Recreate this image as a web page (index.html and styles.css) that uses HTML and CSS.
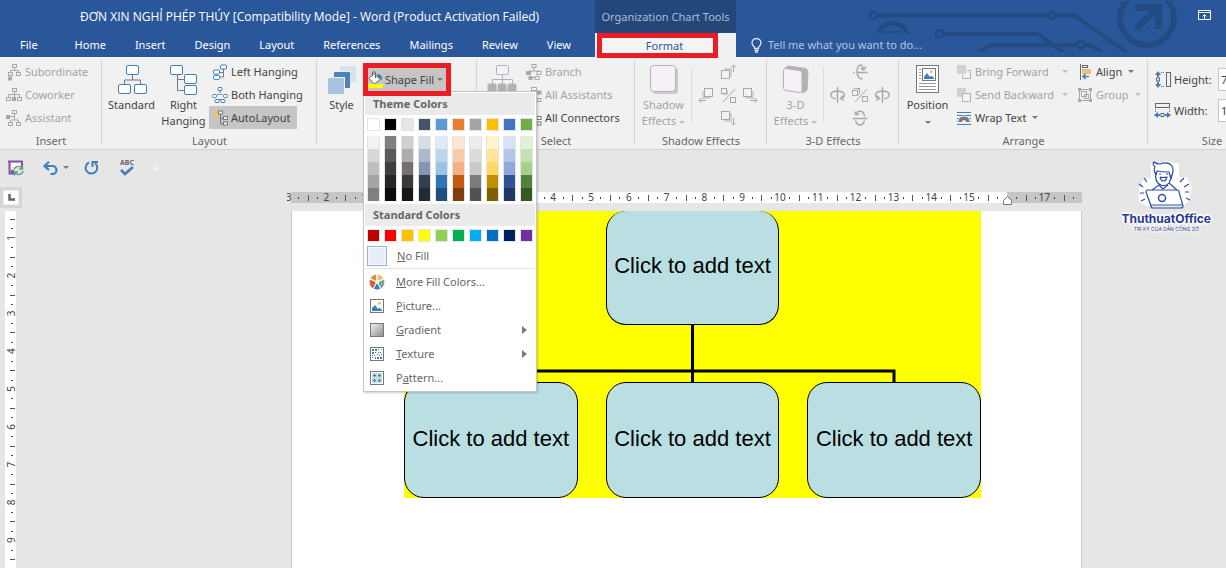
FILE: index.html
```html
<!DOCTYPE html>
<html lang="en">
<head>
<meta charset="utf-8">
<meta name="viewport" content="width=device-width, initial-scale=1">
<title>ĐƠN XIN NGHỈ PHÉP THÚY - Word</title>
<link rel="stylesheet" href="styles.css">
</head>
<body>
<header class="header">
  <svg class="circuit" viewBox="860 0 330 57" width="330" height="57" aria-hidden="true">
    <defs><clipPath id="strip"><rect x="860" y="1" width="330" height="51"/></clipPath>
    <clipPath id="dome"><rect x="870" y="15" width="50" height="18"/></clipPath></defs>
    <g clip-path="url(#strip)" fill="none" stroke="#234b82" stroke-width="4">
      <circle cx="873.5" cy="15.5" r="3.5" stroke-width="3"/><path d="M878 15.5H1047M1056 15.5H1075L1129 54"/>
      <circle cx="1051.5" cy="15.5" r="3.5" stroke-width="3"/>
      <g clip-path="url(#dome)"><circle cx="893" cy="39" r="15.500" stroke-width="5"/><path d="M884 32.500H901" stroke-width="3"/></g>
      <circle cx="939.5" cy="34" r="3.500" stroke-width="3"/><path d="M944 34H1038L1066 54M976 54L990 45H1076M1085 45H1090L1105 54"/>
      <circle cx="1080.500" cy="45" r="3.500" stroke-width="3"/>
      <circle cx="1147" cy="18" r="27" stroke-width="6"/>
      <path d="M1135 7.500H1158.500V29M1136 29L1158 8" stroke-width="7"/>
    </g>
  </svg>
  <h1 class="doc-title">ĐƠN XIN NGHỈ PHÉP THÚY [Compatibility Mode] - Word (Product Activation Failed)</h1>
  <div class="context-title">Organization Chart Tools</div>
  <div class="window-tools">
    <button class="icon-button" aria-label="Ribbon Display Options"><svg width="14" height="11" viewBox="0 0 14 11" fill="none" stroke="#fff"><path d="M.5 .5h12v9h-12zM0 2.500h13M6.500 9V5M4.500 6.500l2-2 2 2"/></svg></button>
  </div>
  <nav class="tabs" aria-label="Ribbon tabs">
    <button class="tab tab-file">File</button><button class="tab">Home</button><button class="tab">Insert</button><button class="tab">Design</button><button class="tab">Layout</button><button class="tab">References</button><button class="tab">Mailings</button><button class="tab">Review</button><button class="tab">View</button>
  </nav>
  <div class="context-tab"><button class="tab-format">Format</button></div>
  <button class="tell-me"><svg width="11" height="15" viewBox="0 0 11 15" fill="none" stroke="#e4ebf7" stroke-width="1.300"><path d="M3.500 10.500V9.200C2 8 1 6.800 1 5a4.500 4.500 0 0 1 9 0c0 1.800-1 3-2.500 4.200v1.300zM3.500 12.300h4M4 14h3"/></svg>Tell me what you want to do...</button>
</header>

<section class="ribbon" aria-label="Format">
  <div class="group">
    <div class="group-body">
      <div class="stack">
        <button class="cmd" disabled><svg width="16" height="18" viewBox="0 0 16 18" fill="none" stroke="#a9a7a9"><rect x="6.500" y="1.500" width="4" height="3"/><path d="M8.500 5v2.500M4.500 9V7.500h8V9"/><rect x="2.500" y="9.500" width="4" height="3"/><rect x="10.500" y="9.500" width="4" height="3"/><rect x="2.500" y="14" width="3" height="3" fill="#a9a7a9"/></svg>Subordinate</button>
        <button class="cmd" disabled><svg width="16" height="18" viewBox="0 0 16 18" fill="none" stroke="#a9a7a9"><rect x="6.500" y="2.500" width="4" height="3"/><path d="M8.500 6v5M2.500 11V8.500h11V11"/><rect x=".5" y="11.500" width="4" height="3"/><rect x="6.500" y="11.500" width="3" height="3" fill="#a9a7a9"/><rect x="11.500" y="11.500" width="4" height="3"/></svg>Coworker</button>
        <button class="cmd" disabled><svg width="16" height="18" viewBox="0 0 16 18" fill="none" stroke="#a9a7a9"><rect x="6.500" y="1.500" width="4" height="3"/><path d="M8.500 5v6M4 7.500h4.500M4.500 13v-2h8v2"/><rect x=".5" y="6.500" width="3" height="3" fill="#a9a7a9"/><rect x="2.500" y="13.500" width="4" height="3"/><rect x="10.500" y="13.500" width="4" height="3"/></svg>Assistant</button>
      </div>
    </div>
    <h2 class="group-label">Insert</h2>
  </div>

  <div class="group">
    <div class="group-body">
      <button class="big big-wide"><svg width="30" height="30" viewBox="0 0 30 30" fill="#fff" stroke="#3f7dbd"><path d="M15.500 10v5M7.500 20v-5h16v5" fill="none" stroke="#777"/><rect x="9.500" y=".5" width="12" height="9" rx="1.500"/><rect x="1.500" y="19.500" width="12" height="9" rx="1.500"/><rect x="17.500" y="19.500" width="12" height="9" rx="1.500"/></svg>Standard</button>
      <button class="big"><svg width="28" height="30" viewBox="0 0 28 30" fill="#fff" stroke="#3f7dbd"><path d="M7.500 9v16.500H15M7.500 14.500H15" fill="none" stroke="#777"/><rect x=".5" y=".5" width="12" height="9" rx="1.500"/><rect x="14.500" y="9.500" width="12" height="9" rx="1.500"/><rect x="14.500" y="20.500" width="12" height="9" rx="1.500"/></svg>Right<br>Hanging</button>
      <div class="stack">
        <button class="cmd"><svg width="16" height="16" viewBox="0 0 16 16" fill="#fff" stroke="#3f7dbd"><path d="M11.500 5v8H7M11.500 8.500H7" fill="none" stroke="#777"/><rect x="8.500" y="1" width="6" height="4" rx="1"/><rect x="1.500" y="6" width="6" height="4" rx="1"/><rect x="1.500" y="11.500" width="6" height="4" rx="1"/></svg>Left Hanging</button>
        <button class="cmd"><svg width="16" height="16" viewBox="0 0 16 16" fill="#fff" stroke="#3f7dbd"><path d="M8 4v3.500M5 7.500h6M4 12.500h8M3.500 9V6.500M12.500 9V6.500" fill="none" stroke="#777" stroke-dasharray="2 1"/><rect x="6" y=".5" width="4" height="3" rx="1"/><rect x=".5" y="7.500" width="4" height="3" rx="1"/><rect x="11.500" y="7.500" width="4" height="3" rx="1"/><rect x="3" y="12.500" width="4" height="3" rx="1"/><rect x="9" y="12.500" width="4" height="3" rx="1"/></svg>Both Hanging</button>
        <button class="cmd pressed" aria-pressed="true"><svg width="16" height="16" viewBox="0 0 16 16" fill="#f4f4f4" stroke="#777"><path d="M3 0h4L5 4h2L1 11l1.500-5H0z" fill="#f0bd72" stroke="none"/><path d="M8.500 3.500v10.500h3M8.500 8.500h3" fill="none"/><rect x="6.500" y="1" width="4" height="3"/><rect x="11.500" y="6.500" width="4" height="3"/><rect x="11.500" y="12" width="4" height="3"/></svg>AutoLayout</button>
      </div>
    </div>
    <h2 class="group-label">Layout</h2>
  </div>

  <div class="group">
    <div class="group-body">
      <button class="big big-narrow"><svg width="30" height="30" viewBox="0 0 30 30"><rect x="13" y="1" width="16" height="16" rx="1" fill="#d4e2f1"/><rect x="6" y="6" width="17" height="17" rx="1" fill="#f1f1f1"/><rect x="7" y="7" width="16" height="16" rx="1" fill="#4a82bd"/><rect x="0" y="12" width="18" height="18" fill="#f1f1f1"/><rect x="1" y="13" width="16" height="16" rx="1" fill="#a9c2df"/></svg>Style</button>
      <div class="fill-picker">
        <button class="fill-button" aria-expanded="true"><svg width="15" height="17" viewBox="0 0 15 17"><path d="M9 3c4 0 5.500 2 5 7-1-2-2-3-4-3z" fill="#3f7dbd"/><path d="M6 2.500L12 8.500 6.500 13 1 7.500z" fill="#fff" stroke="#666"/><path d="M4.500 5V1.500c0-1 3-1 3 0V7" fill="none" stroke="#666"/><path d="M0 13h15v4H0z" fill="#ff0"/></svg>Shape Fill<i class="caret"></i></button>
        <div class="menu" role="menu">
          <h3 class="menu-title">Theme Colors</h3>
          <div class="swatches" id="theme"></div>
          <div class="shades" id="shades"></div>
          <h3 class="menu-title">Standard Colors</h3>
          <div class="swatches" id="standard"></div>
          <button class="item no-fill" role="menuitem"><span class="fill-box"></span><span><u>N</u>o Fill</span></button>
          <button class="item" role="menuitem"><svg width="16" height="16" viewBox="0 0 16 16" stroke="#fff"><path d="M8 8L7.500 0A8 8 0 0 0 1 4.500z" fill="#e08a3c"/><path d="M8 8V0A8 8 0 0 1 15 5z" fill="#eebf79"/><path d="M8 8L15.300 5A8 8 0 0 1 12 15z" fill="#74a894"/><path d="M8 8L12 15A8 8 0 0 1 4 15z" fill="#3f7dbd"/><path d="M8 8L4 15A8 8 0 0 1 .7 5z" fill="#d1603d"/><circle cx="8" cy="8" r="1.500" fill="#fff"/></svg><span><u>M</u>ore Fill Colors...</span></button>
          <button class="item" role="menuitem"><svg width="16" height="16" viewBox="0 0 16 16"><rect x="1.500" y="1.500" width="13" height="13" fill="#fff" stroke="#777"/><path d="M3 13V10l3-3 3 4 1.500-1.500L13 12v1z" fill="#3f7dbd"/><circle cx="10.500" cy="5" r="1.500" fill="#eebf79"/></svg><span><u>P</u>icture...</span></button>
          <button class="item" role="menuitem"><svg width="16" height="16" viewBox="0 0 16 16"><defs><linearGradient id="gray" x2="1" y2="1"><stop stop-color="#f4f4f4"/><stop offset="1" stop-color="#8a8a8a"/></linearGradient></defs><rect x="1.500" y="1.500" width="13" height="13" fill="url(#gray)" stroke="#777"/></svg><span><u>G</u>radient</span><i class="more"></i></button>
          <button class="item" role="menuitem"><svg width="16" height="16" viewBox="0 0 16 16"><rect x="1.500" y="1.500" width="13" height="13" fill="#fff" stroke="#777"/><path d="M3 3h2v2H3zM6 3h2v2H6zM9 3h1v1H9zM12 3h1v1h-1zM3 6h2v2H3zM6 6h1v1H6zM9 6h1v1H9zM11 6h1v1h-1zM3 9h1v1H3zM5 9h1v1H5zM8 8h1v1H8zM10 9h1v1h-1zM12 8h1v1h-1zM3 11h1v1H3zM6 11h1v2H6zM8 11h2v2H8zM11 11h2v2h-2z" fill="#3f7dbd"/></svg><span><u>T</u>exture</span><i class="more"></i></button>
          <button class="item" role="menuitem"><svg width="16" height="16" viewBox="0 0 16 16"><rect x="1.500" y="1.500" width="13" height="13" fill="#fff" stroke="#777"/><path d="M3 3h10v10H3z" fill="#c3dcd8"/><path d="M4 5.500h3M5.500 4v3M9 5.500h3M10.500 4v3M4 10.500h3M5.500 9v3M9 10.500h3M10.500 9v3" stroke="#3f7dbd"/></svg><span>P<u>a</u>ttern...</span></button>
        </div>
      </div>
    </div>
    <h2 class="group-label">Shape Styles</h2>
  </div>

  <div class="group">
    <div class="group-body">
      <button class="big big-narrow" disabled><svg width="30" height="30" viewBox="0 0 30 30" fill="#b3b1b3" stroke="#b3b1b3"><path d="M15.500 10v9M5.500 19v-4.500h20V19" fill="none"/><rect x="9.500" y=".5" width="12" height="9" rx="1" fill="#f6f0f8"/><rect x="1" y="19" width="8" height="8" rx="1"/><rect x="11" y="19" width="8" height="8" rx="1"/><rect x="21" y="19" width="8" height="8" rx="1"/></svg>Select</button>
      <div class="stack">
        <button class="cmd" disabled><svg width="16" height="16" viewBox="0 0 16 16" fill="#f6f0f8" stroke="#a9a7a9"><path d="M8 4v3M3 8.500V7h10v1.500M4 13.500h8" fill="none"/><rect x="6" y=".5" width="4" height="3"/><rect x=".5" y="7.500" width="4" height="3" fill="#a9a7a9"/><rect x="11" y="7.500" width="4" height="3"/><rect x="3" y="12.500" width="3" height="3" fill="#a9a7a9"/><rect x="9" y="12.500" width="4" height="3"/></svg>Branch</button>
        <button class="cmd" disabled><svg width="16" height="16" viewBox="0 0 16 16" fill="#f6f0f8" stroke="#a9a7a9"><path d="M7.500 4v8.500H11M7.500 5.500H11" fill="none"/><rect x="5.500" y=".5" width="5" height="3"/><rect x="11" y="4" width="4" height="3" fill="#a9a7a9"/><rect x="11" y="11.500" width="4" height="3"/></svg>All Assistants</button>
        <button class="cmd"><svg width="16" height="16" viewBox="0 0 16 16" fill="#fff" stroke="#777"><path d="M7.500 4v9H11M7.500 8H11" fill="none" stroke="#3f7dbd" stroke-width="2"/><rect x="5.500" y=".5" width="5" height="3"/><rect x="11" y="6.500" width="4" height="3"/><rect x="11" y="12" width="4" height="3"/></svg>All Connectors</button>
      </div>
    </div>
    <h2 class="group-label">Select</h2>
  </div>

  <div class="group">
    <div class="group-body">
      <button class="big" disabled><svg width="30" height="30" viewBox="0 0 30 30"><rect x="4" y="3" width="25" height="26" rx="3" fill="#cbc9cb"/><rect x="1.500" y=".5" width="25" height="26" rx="3" fill="#f6f0f8" stroke="#b3b1b3"/></svg>Shadow<span>Effects<i class="caret"></i></span></button>
      <div class="pad">
        <button class="icon-button n" disabled aria-label="Nudge Shadow Up"><svg width="16" height="16" viewBox="0 0 16 16"><path d="M4 4h8v9H4z" fill="#d2d0d2"/><rect x="1.500" y="6.500" width="8" height="8" fill="#f6f0f8" stroke="#a9a7a9"/><path d="M13.500 8V1M11 3.500l2.500-2.500L16 3.500" fill="none" stroke="#a9a7a9"/></svg></button>
        <button class="icon-button w" disabled aria-label="Nudge Shadow Left"><svg width="16" height="16" viewBox="0 0 16 16"><path d="M4 4h9v8H4z" fill="#d2d0d2"/><rect x="6.500" y="1.500" width="8" height="8" fill="#f6f0f8" stroke="#a9a7a9"/><path d="M8 13.500H1M3.500 11L1 13.500 3.500 16" fill="none" stroke="#a9a7a9"/></svg></button>
        <button class="icon-button c" disabled aria-label="Shadow On/Off"><svg width="16" height="16" viewBox="0 0 16 16"><path d="M3 3h5v5H3z" fill="#d2d0d2"/><rect x="1.500" y="1.500" width="5" height="5" fill="#f6f0f8" stroke="#a9a7a9"/><rect x="10.500" y="10.500" width="5" height="5" fill="#f6f0f8" stroke="#a9a7a9"/><path d="M3 15L15 2" stroke="#a9a7a9"/></svg></button>
        <button class="icon-button e" disabled aria-label="Nudge Shadow Right"><svg width="16" height="16" viewBox="0 0 16 16"><path d="M3 4h9v8H3z" fill="#d2d0d2"/><rect x="1.500" y="1.500" width="8" height="8" fill="#f6f0f8" stroke="#a9a7a9"/><path d="M8 13.500h7M12.500 11l2.500 2.500-2.500 2.500" fill="none" stroke="#a9a7a9"/></svg></button>
        <button class="icon-button s" disabled aria-label="Nudge Shadow Down"><svg width="16" height="16" viewBox="0 0 16 16"><path d="M4 3h8v9H4z" fill="#d2d0d2"/><rect x="1.500" y="1.500" width="8" height="8" fill="#f6f0f8" stroke="#a9a7a9"/><path d="M13.500 8v7M11 12.500l2.500 2.500 2.500-2.500" fill="none" stroke="#a9a7a9"/></svg></button>
      </div>
    </div>
    <h2 class="group-label">Shadow Effects</h2>
  </div>

  <div class="group">
    <div class="group-body">
      <button class="big" disabled><svg width="30" height="30" viewBox="0 0 30 30" stroke="#b3b1b3" stroke-linejoin="round"><path d="M4 3l3-2 18 2.500 2 2.500-1 19-4 3z" fill="#b3b1b3"/><path d="M4.500 3.500l14.500 2q2 .5 2 2.500v17.500q0 2-2 2L5 25.500q-2.500-.5-2.500-2.500V5.500q0-2 2-2z" fill="#f6f0f8"/></svg>3-D<span>Effects<i class="caret"></i></span></button>
      <div class="pad">
        <button class="icon-button n" disabled aria-label="Tilt Up"><svg width="16" height="16" viewBox="0 0 16 16" fill="none" stroke="#a9a7a9" stroke-width="1.400"><path d="M1 8.500h1.500M5 8.500h10.500M10.500 14.500C4 17 3.500 1 8.500 1q2 0 3 4.500M8.500 4l3.200 2L14 2.500"/></svg></button>
        <button class="icon-button w" disabled aria-label="Tilt Left"><svg width="16" height="16" viewBox="0 0 16 16" fill="none" stroke="#a9a7a9" stroke-width="1.400"><path d="M7.500 0v16M5.500 12C-2 10 0 4 7.500 4S17 10 11 11.500M13 8.500L10.500 11.500l3.500 2"/></svg></button>
        <button class="icon-button c" disabled aria-label="3-D On/Off"><svg width="16" height="16" viewBox="0 0 16 16" fill="#f6f0f8" stroke="#a9a7a9"><path d="M.5 3.500l2-2h5v5l-2 2h-5zM.5 3.500h5v5M5.500 3.500l2-2"/><rect x="10.500" y="9.500" width="5" height="5"/><path d="M3 15L15 2"/></svg></button>
        <button class="icon-button e" disabled aria-label="Tilt Right"><svg width="16" height="16" viewBox="0 0 16 16" fill="none" stroke="#a9a7a9" stroke-width="1.400"><path d="M8.500 0v16M10.500 12C18 10 16 4 8.500 4S-1 10 5 11.500M3 8.500L5.500 11.500l-3.500 2"/></svg></button>
        <button class="icon-button s" disabled aria-label="Tilt Down"><svg width="16" height="16" viewBox="0 0 16 16" fill="none" stroke="#a9a7a9" stroke-width="1.400"><path d="M.5 8.500h15M12.500 6.500C12 0 6 0 4 4M2.500 1.500L4 4.800l3.500-1M3.500 10.500c1.500 6 7.500 6 9 0"/></svg></button>
      </div>
    </div>
    <h2 class="group-label">3-D Effects</h2>
  </div>

  <div class="group">
    <div class="group-body">
      <button class="big"><svg width="30" height="30" viewBox="0 0 30 30"><rect x="3.500" y=".5" width="22" height="27" fill="#fff" stroke="#777"/><path d="M6 4.500h2M6 7.500h2M6 10.500h2M6 13.500h2M6 18.500h17M6 21.500h17M6 24.500h17" stroke="#999"/><rect x="9.500" y="3.500" width="13" height="12" fill="#fff" stroke="#777"/><path d="M11 14v-2l3-4 3 4 1.500-1.500L21 13v1z" fill="#3f7dbd"/><circle cx="18.500" cy="6.500" r="1.500" fill="#eebf79"/></svg>Position<span><i class="caret lone"></i></span></button>
      <div class="stack wide">
        <button class="cmd spread" disabled><svg width="16" height="16" viewBox="0 0 16 16"><path d="M1 1h9v9H1z" fill="#d6d0d6"/><path d="M11 6.500h3.500v8h-8V11" fill="none" stroke="#b3b1b3"/></svg>Bring Forward<i class="caret"></i></button>
        <button class="cmd spread" disabled><svg width="16" height="16" viewBox="0 0 16 16"><path d="M1 1h9v9H1z" fill="#d6d0d6"/><rect x="6.500" y="6.500" width="8" height="8" fill="#f6f0f8" stroke="#b3b1b3"/></svg>Send Backward<i class="caret"></i></button>
        <button class="cmd"><svg width="16" height="16" viewBox="0 0 16 16" fill="none"><path d="M1 2.500h14M1 5.500h14M1 8.500h3M12 8.500h3M1 11.500h3M12 11.500h3M1 14.500h14" stroke="#3f7dbd"/><path d="M2 12.500q0-6.500 6-6.500t6 6.500h-4q0-2-2-2t-2 2z" fill="#777" stroke="#f1f1f1"/></svg>Wrap Text<i class="caret"></i></button>
      </div>
      <div class="stack">
        <button class="cmd"><svg width="16" height="16" viewBox="0 0 16 16" fill="none"><path d="M3.500 0v16" stroke="#666"/><rect x="5.500" y="1.500" width="5" height="2" stroke="#666"/><path d="M5 5h9v5H5z" fill="#eebf79"/><path d="M12 12.500H6M8.500 10L6 12.500 8.500 15" stroke="#3f7dbd" stroke-width="1.600"/></svg>Align<i class="caret"></i></button>
        <button class="cmd" disabled><svg width="16" height="16" viewBox="0 0 16 16" fill="none" stroke="#a9a7a9"><path d="M2.500 3v10M3 13.500h10M13.500 3v10M3 2.500h10"/><path d="M1 1h3v3H1zM12 1h3v3h-3zM1 12h3v3H1zM12 12h3v3h-3z" fill="#a9a7a9" stroke="none"/><rect x="4.500" y="4.500" width="5" height="5"/><rect x="7.500" y="7.500" width="4" height="4"/></svg>Group<i class="caret"></i></button>
      </div>
    </div>
    <h2 class="group-label">Arrange</h2>
  </div>

  <div class="group">
    <div class="group-body sizes">
      <label class="size"><svg width="18" height="18" viewBox="0 0 18 18" fill="none"><path d="M4 0l3 4H1zM4 17l3-4H1z" fill="#3f7dbd"/><path d="M4 4v2M4 11v2" stroke="#3f7dbd" stroke-width="2"/><rect x="2.500" y="7" width="3" height="3" stroke="#666"/><path d="M7 1.500h4M7 15.500h4" stroke="#666" stroke-dasharray="1 1"/><rect x="12.500" y="1.500" width="4" height="14" stroke="#666"/></svg><span>Height:</span><input class="size-input" value="7.6 cm"></label>
      <label class="size"><svg width="18" height="18" viewBox="0 0 18 18" fill="none"><path d="M0 13l4-3v6zM17 13l-4-3v6z" fill="#3f7dbd"/><path d="M4 13h2M11 13h2" stroke="#3f7dbd" stroke-width="2"/><rect x="7" y="11.500" width="3" height="3" stroke="#666"/><path d="M1.500 7v3M15.500 7v3" stroke="#666" stroke-dasharray="1 1"/><rect x="1.500" y="1.500" width="14" height="4" stroke="#666"/></svg><span>Width:</span><input class="size-input" value="15.2 cm"></label>
    </div>
    <h2 class="group-label">Size</h2>
  </div>
</section>

<main class="workspace">
  <div class="quick">
    <button class="icon-button" aria-label="Save"><svg width="17" height="17" viewBox="0 0 17 17" fill="none"><path d="M1 2.500h14V8M2.500 1.500v13H7" stroke="#8650a5" stroke-width="2"/><path d="M4 4h9v4H4z" fill="#fff"/><path d="M4 11h3v4H4z" fill="#8650a5"/><path d="M7 10.500a4.500 4 0 0 1 8-1.500M16 12a4.500 4 0 0 1-8 2M15.500 6.500V10H12M7.500 16.500V13H11" stroke="#5da088" stroke-width="1.400"/></svg></button>
    <span class="undo"><button class="icon-button" aria-label="Undo"><svg width="15" height="14" viewBox="0 0 15 14" fill="none" stroke="#3f7dbd" stroke-width="2.200"><path d="M6 .8L1.500 5 6 9M2 5h7.500a4 4 0 0 1 0 8H7.500"/></svg></button><i class="caret lone"></i></span>
    <button class="icon-button" aria-label="Repeat"><svg width="15" height="15" viewBox="0 0 15 15" fill="none" stroke="#3f7dbd" stroke-width="2"><path d="M5 2.500A5.800 5.800 0 1 0 11 3.200M8.500 7V2H14"/></svg></button>
    <button class="icon-button spell" aria-label="Spelling"><span>ABC</span><svg width="14" height="10" viewBox="0 0 14 10" fill="none" stroke="#3f7dbd" stroke-width="2.600"><path d="M1 4l4 4 8-7"/></svg></button>
    <button class="icon-button" aria-label="Customize"><svg width="7" height="8" viewBox="0 0 7 8"><path d="M1 1h5M1 4h5L3.500 7z" fill="#f4f4f4" stroke="#f4f4f4"/></svg></button>
  </div>
  <div class="rulers">
    <div class="tab-stop"><button class="tab-stop-button" aria-label="Tab stop"><svg width="7" height="7" viewBox="0 0 7 7"><path d="M1.500 0v5.500H7" fill="none" stroke="#666" stroke-width="2.500"/></svg></button></div>
    <div class="column"><svg class="ruler-h" id="ruler-h" width="799" height="16" viewBox="-4 0 799 16" aria-label="Horizontal ruler"></svg></div>
  </div>
  <div class="document">
    <div class="side"><svg id="ruler-v" width="12" height="357" viewBox="0 0 12 357" aria-label="Vertical ruler"></svg></div>
    <div class="column">
      <article class="page">
        <div class="chart">
          <div class="node lead">Click to add text</div>
          <svg class="links" viewBox="0 0 576 57" aria-hidden="true"><path d="M87 57V46H489.500V57M288 0V57" fill="none" stroke="#000" stroke-width="3"/></svg>
          <div class="node">Click to add text</div>
          <div class="node">Click to add text</div>
          <div class="node">Click to add text</div>
        </div>
      </article>
    </div>
  </div>
  <aside class="brand">
    <svg width="60" height="50" viewBox="-2 0 60 50" fill="none" stroke="#2f4fa8" stroke-width="1.200" stroke-linejoin="round"><path d="M13 2h7l9-2 12 3v13h7l6 10-3 14-6 5H9l-8-4V28l4-9 8-2z" fill="#fff" stroke="none"/><path d="M17 6q-3-3-1-5 2 2 6 2 8-3 12 2 2 4 0 9l-1 4-2-7q-7 0-12-1l-1 4q-3-5-1-8z"/><path d="M18 11q-2 10 5 13 5 2 8-2 2-3 2-8M22 16q3 1 7 0-1 4-3.500 4T22 16M21 13h2M28 13h2M21 24l-7 5M31 22l8 7M21 24l4 4 5-4"/><path d="M9 29h30q2 0 2 2l4 14q0 2-2 2H15q-2 0-2-2L8 31q0-2 1-2zM12 44h32"/><circle cx="24" cy="37" r="3.500" stroke-width="1.500"/><path d="M9 21l-3-4M5 26l-4-3M6 32H2M7 38l-4 2M42 21l4-4M46 26l5-3M47 31h4M48 37l4 2"/></svg>
    <strong class="brand-name">ThuthuatOffice</strong>
    <span class="brand-tag">TRI KỶ CỦA DÂN CÔNG SỞ</span>
  </aside>
</main>
<script src="script.js"></script>
</body>
</html>
```

FILE: styles.css
```css
* { box-sizing: border-box; }
body {
  margin: 0;
  min-height: 100vh;
  display: flex;
  flex-direction: column;
  overflow: hidden;
  background: #e6e6e6;
  color: #444;
  font: 11px/16px "Noto Sans", "Open Sans", sans-serif;
}
button, input { font: inherit; color: inherit; }
button { background: none; border: 0; padding: 0; margin: 0; white-space: nowrap; }
h1, h2, h3 { margin: 0; font: inherit; }
svg { display: block; flex: none; }

/* Title bar and tabs */
.header {
  position: relative;
  display: grid;
  grid-template-columns: 595px 141px 1fr;
  grid-template-rows: 33px 24px;
  background: #2a579a;
  color: #fff;
}
.circuit { position: absolute; right: 36px; top: 0; }
.doc-title { padding-left: 80px; font: 12px/33px "Open Sans", "Noto Sans", sans-serif; white-space: nowrap; }
.context-title { background: #234778; color: #a9bcdb; text-align: center; line-height: 34px; white-space: nowrap; }
.window-tools { display: flex; justify-content: flex-end; align-items: flex-start; padding: 10px 14px 0; position: relative; }
.icon-button { display: flex; align-items: center; justify-content: center; }
.tabs { display: flex; gap: 29px; padding-left: 20px; }
.tab-file { margin-right: 8px; }
.context-tab { background: #f1f1f1; padding-left: 2px; }
.tab-format { position: relative; width: 121px; height: 25px; border: 5px solid #ed1c24; background: #f4f4f4; color: #2a579a; padding-left: 14px; line-height: 14px; }
.tell-me { position: relative; display: flex; align-items: center; gap: 6px; padding-left: 15px; color: #b4c5e1; }

/* Ribbon */
.ribbon {
  display: grid;
  grid-template-columns: 102px 215px 160px 158px 132px 132px 249px 128px;
  height: 93px;
  padding-top: 3px;
  background: #f1f1f1;
  border-bottom: 1px solid #d2d2d2;
}
.group {
  display: flex;
  flex-direction: column;
  justify-content: space-between;
  background: linear-gradient(#d2d2d2, #d2d2d2) no-repeat right top / 1px 85px;
}
.group-label { text-align: center; color: #666; }
.group-body { display: flex; padding-left: 3px; }
.stack { display: flex; flex-direction: column; align-items: flex-start; }
.cmd { display: flex; align-items: center; gap: 3px; height: 23px; padding: 0 7px 0 3px; }
.pressed { background: #c5c5c5; }
button:disabled { color: #a3a1a3; }
.big { display: flex; flex-direction: column; align-items: center; width: 51px; height: 70px; padding-top: 5px; }
.big svg { margin-bottom: 2px; }
.big-narrow { width: 43px; }
.big-wide { width: 53px; }
.caret { display: inline-block; vertical-align: middle; margin-left: 3px; border: 3px solid transparent; border-top-color: #777; border-bottom: 0; }
.lone { margin-left: 0; }
button:disabled .caret { border-top-color: #c0bec0; }
.pad {
  display: grid;
  grid-template: "a n b" 23px "w c e" 23px "x s y" 23px / 22px 22px 22px;
  margin-left: 2px;
  padding-left: 4px;
  background: linear-gradient(#dcdcdc, #dcdcdc) no-repeat left center / 1px 56px;
}
.n { grid-area: n; }
.w { grid-area: w; }
.c { grid-area: c; }
.e { grid-area: e; }
.s { grid-area: s; }
.wide { width: 121px; }
.spread { width: 100%; padding-right: 6px; }
.spread .caret { margin-left: auto; }
.sizes { flex-direction: column; gap: 8px; padding-top: 8px; }
.size { display: grid; grid-template-columns: 20px 44px 54px; align-items: center; padding-left: 3px; }
.size-input { width: 54px; height: 23px; border: 1px solid #c6c6c6; background: #fff; padding: 0 2px; }

/* Shape Fill menu */
.fill-picker { position: relative; padding-top: 3px; }
.fill-button { position: relative; z-index: 3; display: flex; align-items: center; width: 88px; height: 33px; border: 5px solid #ed1c24; background: #c5c5c5; }
.fill-button svg { margin-right: 2px; }
.menu { position: absolute; z-index: 2; left: 0; top: 31px; width: 174px; padding: 1px; background: #fff; border: 1px solid #c6c6c6; box-shadow: 1px 1px 2px #0003; }
.menu-title { background: #ebebeb; padding-left: 8px; line-height: 22px; font-weight: 700; color: #666; }
.swatches, .shades { display: grid; grid-template-columns: repeat(10, 13px); column-gap: 4px; padding: 3px 2px 4px; }
.shades { padding: 1px 2px 3px; }
.shades button { width: 13px; height: 13px; border: 0 solid #e2e4e7; border-width: 0 1px; }
.swatches button { width: 13px; height: 13px; border: 1px solid #e2e4e7; }
.item { display: flex; align-items: center; width: 100%; height: 24px; padding-left: 4px; gap: 11px; color: #666; text-align: left; }
.no-fill { padding-left: 2px; gap: 10px; height: 23px; padding-bottom: 2px; border-bottom: 1px solid #e1e1e1; margin-bottom: 1px; }
.fill-box { width: 20px; height: 20px; border: 1px solid #94b3de; background: #e8edf7; box-shadow: inset 0 0 0 1px #f4f7fb; }
.more { margin-left: auto; margin-right: 8px; border: 4px solid transparent; border-left: 5px solid #777; border-right: 0; }

/* Workspace */
.workspace { position: relative; flex: 1; display: flex; flex-direction: column; }
.quick { display: flex; align-items: center; height: 37px; padding: 0 0 2px 7px; gap: 19px; color: #666; }
.undo { display: flex; align-items: center; gap: 5px; margin-right: -4px; }
.spell { flex-direction: column; margin-left: 2px; }
.spell span { font-size: 7px; line-height: 7px; font-weight: 700; }
.rulers, .document { display: grid; grid-template-columns: 147px 1fr; }
.rulers { height: 24px; align-items: start; }
.tab-stop { display: flex; justify-content: center; align-items: center; width: 22px; height: 21px; background: #d6d6d6; }
.tab-stop-button { display: flex; align-items: center; justify-content: center; width: 16px; height: 15px; background: #fff; border: 1px solid #eee; }
.column { display: flex; justify-content: center; }
.ruler-h { margin-top: 2px; }
.side { padding-left: 5px; }
.document { flex: 1; }
.page { width: 791px; padding-left: 112px; background: #fff; border-left: 1px solid #c8c8c8; border-right: 1px solid #c8c8c8; }
.chart { display: grid; grid-template-columns: repeat(3, 1fr); grid-template-rows: 114px 57px 116px; column-gap: 28px; width: 577px; background: #ff0; }
.node { display: flex; align-items: center; justify-content: center; padding-bottom: 3px; border: 1px solid #000; border-radius: 20px; background: #badfe2; color: #000; font: 22px "Liberation Sans", Arial, sans-serif; white-space: nowrap; }
.lead { grid-column: 2; border-top: 0; }
.links { grid-column: 1 / -1; width: 100%; height: 57px; }

.brand { position: absolute; right: 15px; top: 11px; display: flex; flex-direction: column; align-items: center; color: #1f3a93; text-shadow: 0 0 1px #fff, 2px 0 1px #fff, -2px 0 1px #fff, 0 2px 1px #fff, 0 -2px 1px #fff; }
.brand-name { font: 700 12px/16px Inter, sans-serif; }
.brand-tag { font: 5px/5px Inter, sans-serif; }

.ruler-text { font: 10px "Noto Sans", sans-serif; fill: #444; text-anchor: middle; }
```

FILE: script.js
```js
const theme = ["#fff", "#000", "#e7e6e6", "#44546a", "#5b9bd5", "#ed7d31", "#a5a5a5", "#ffc000", "#4472c4", "#70ad47"];
const standard = ["#c00000", "#f00", "#ffc000", "#ff0", "#92d050", "#00b050", "#00b0f0", "#0070c0", "#002060", "#7030a0"];
const shades = [
  ["#f2f2f2", "#7f7f7f", "#d0cece", "#d6dce4", "#deebf6", "#fbe5d5", "#ededed", "#fff2cc", "#d9e2f3", "#e2efd9"],
  ["#d8d8d8", "#595959", "#aeabab", "#adb9ca", "#bdd7ee", "#f7cbac", "#dbdbdb", "#fee599", "#b4c6e7", "#c5e0b3"],
  ["#bfbfbf", "#3f3f3f", "#757070", "#8496b0", "#9cc3e5", "#f4b183", "#c9c9c9", "#ffd965", "#8eaadb", "#a8d08d"],
  ["#a5a5a5", "#262626", "#3a3838", "#323f4f", "#2e75b5", "#c55a11", "#7b7b7b", "#bf9000", "#2f5496", "#538135"],
  ["#7f7f7f", "#0c0c0c", "#171616", "#222a35", "#1e4e79", "#833c0b", "#525252", "#7f6000", "#1f3864", "#375623"]
];

function fill(id, colors) {
  const box = document.getElementById(id);
  for (const color of colors) {
    const b = document.createElement("button");
    b.style.background = color;
    b.setAttribute("aria-label", color);
    box.append(b);
  }
}
fill("theme", theme);
fill("shades", shades.flat());
fill("standard", standard);

const CM = 37.8;

function marks(from, to, draw) {
  for (let q = from * 4; q <= to * 4; q++) draw(q / 4, q % 4 === 0, q % 2 === 0);
}

let h = '<rect y="3" width="791" height="11" fill="#fff"/><rect y="3" width="113" height="11" fill="#c6c6c6"/><rect x="716" y="3" width="75" height="11" fill="#c6c6c6"/>';
marks(-3, 17.75, (n, whole, half) => {
  const x = 111 + n * CM;
  if (whole) {
    if (n !== 0 && n !== 16) h += `<text class="ruler-text" x="${x}" y="12">${Math.abs(n)}</text>`;
  } else if (half) h += `<path d="M${Math.round(x)}.5 6v6" stroke="#555"/>`;
  else h += `<rect x="${Math.round(x)}" y="8" width="1" height="2" fill="#444"/>`;
});
h += '<path d="M712.500 15.500v-4l4-4 4 4v4z" fill="#fff" stroke="#777"/>';
document.getElementById("ruler-h").innerHTML = h;

let v = '<rect width="11" height="357" fill="#fff"/>';
marks(0.5, 9.5, (n, whole, half) => {
  const y = -11 + n * CM;
  if (whole) v += `<text class="ruler-text" transform="translate(10 ${y}) rotate(-90)">${n}</text>`;
  else if (half) v += `<path d="M5 ${Math.round(y)}.500h5" stroke="#555"/>`;
  else v += `<rect x="6" y="${Math.round(y)}" width="2" height="1" fill="#444"/>`;
});
document.getElementById("ruler-v").innerHTML = v;
```
